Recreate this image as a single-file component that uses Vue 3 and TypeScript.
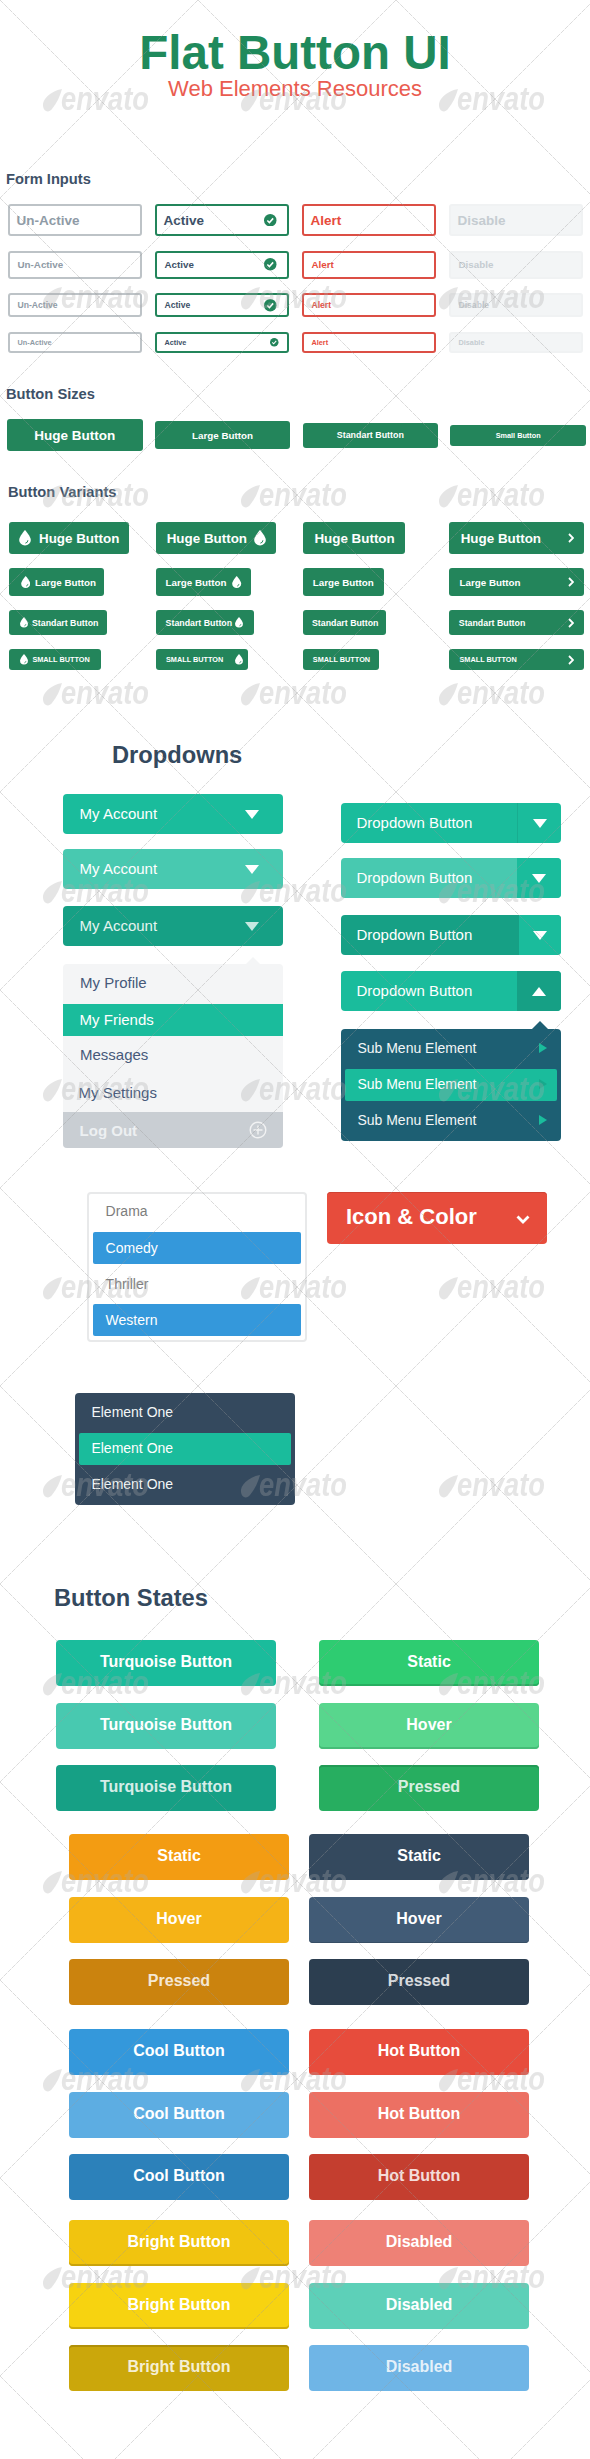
<script setup lang="ts">
type Field = { state: string; label: string };

const fields: Field[] = [
  { state: 'idle', label: 'Un-Active' },
  { state: 'active', label: 'Active' },
  { state: 'alert', label: 'Alert' },
  { state: 'off', label: 'Disable' },
];
const fieldSizes = ['f1', 'f2', 'f3', 'f4'];

const sizeButtons = [
  { size: 'huge', label: 'Huge Button' },
  { size: 'large', label: 'Large Button' },
  { size: 'std', label: 'Standart Button' },
  { size: 'small', label: 'Small Button' },
];

const variantRows = [
  { size: 'huge', label: 'Huge Button' },
  { size: 'large', label: 'Large Button' },
  { size: 'std', label: 'Standart Button' },
  { size: 'small', label: 'SMALL BUTTON' },
];
const variantKinds = ['left', 'right', 'plain', 'arrow'];

const accounts = ['base', 'hover', 'press'];
const splits = [
  { main: 'base', side: 'side-base' },
  { main: 'hover', side: 'side-solid' },
  { main: 'press', side: 'side-wide' },
];
const menuItems = [
  { label: 'My Profile', cls: 'm-first' },
  { label: 'My Friends', cls: 'm-on' },
  { label: 'Messages', cls: 'm-msg' },
  { label: 'My Settings', cls: 'm-set' },
];
const subItems = [
  { label: 'Sub Menu Element', on: false },
  { label: 'Sub Menu Element', on: true },
  { label: 'Sub Menu Element', on: false },
];
const genres = [
  { label: 'Drama', cls: 'g-first' },
  { label: 'Comedy', cls: 'g-on' },
  { label: 'Thriller', cls: 'g-plain' },
  { label: 'Western', cls: 'g-on' },
];

const stateGroups = [
  {
    cls: 'group-wide',
    items: [
      { label: 'Turquoise Button', cls: 'tq1' },
      { label: 'Static', cls: 'gr1' },
      { label: 'Turquoise Button', cls: 'tq2' },
      { label: 'Hover', cls: 'gr2' },
      { label: 'Turquoise Button', cls: 'tq3 dim' },
      { label: 'Pressed', cls: 'gr3 dim' },
    ],
  },
  {
    cls: 'group-a',
    items: [
      { label: 'Static', cls: 'or1' },
      { label: 'Static', cls: 'nv1' },
      { label: 'Hover', cls: 'or2' },
      { label: 'Hover', cls: 'nv2' },
      { label: 'Pressed', cls: 'or3 dim' },
      { label: 'Pressed', cls: 'nv3 dim' },
    ],
  },
  {
    cls: 'group-b',
    items: [
      { label: 'Cool Button', cls: 'bl1' },
      { label: 'Hot Button', cls: 'rd1' },
      { label: 'Cool Button', cls: 'bl2' },
      { label: 'Hot Button', cls: 'rd2' },
      { label: 'Cool Button', cls: 'bl3' },
      { label: 'Hot Button', cls: 'rd3 dim' },
    ],
  },
  {
    cls: 'group-c',
    items: [
      { label: 'Bright Button', cls: 'yl1' },
      { label: 'Disabled', cls: 'ds1' },
      { label: 'Bright Button', cls: 'yl2' },
      { label: 'Disabled', cls: 'ds2' },
      { label: 'Bright Button', cls: 'yl3 dim' },
      { label: 'Disabled', cls: 'ds3 dim' },
    ],
  },
];
</script>

<template>
  <div class="page">
    <h1 class="title">Flat Button UI</h1>
    <p class="subtitle">Web Elements Resources</p>

    <h2 class="label label-forms">Form Inputs</h2>
    <div class="fields">
      <template v-for="size in fieldSizes" :key="size">
        <div v-for="f in fields" :key="size + f.state" class="field" :class="[size, f.state]">
          <span>{{ f.label }}</span>
          <svg v-if="f.state === 'active'" class="check" viewBox="0 0 12 12">
            <circle cx="6" cy="6" r="6" fill="#23855b" />
            <path d="M3.2 6.2l2 2 3.6-4" fill="none" stroke="#fff" stroke-width="1.5" />
          </svg>
        </div>
      </template>
    </div>

    <h2 class="label label-sizes">Button Sizes</h2>
    <div class="sizes">
      <div v-for="b in sizeButtons" :key="b.size" class="size-btn" :class="b.size">{{ b.label }}</div>
    </div>

    <h2 class="label label-variants">Button Variants</h2>
    <div class="variants">
      <template v-for="row in variantRows" :key="row.size">
        <div v-for="kind in variantKinds" :key="row.size + kind" class="variant" :class="[row.size, kind]">
          <svg v-if="kind === 'left'" class="drop" viewBox="0 0 12 16">
            <path d="M6 0C6 0 0 6.8 0 10.2A6 5.8 0 0 0 12 10.2C12 6.8 6 0 6 0Z" fill="#fff" />
            <path d="M9 10.6a3.2 3.2 0 0 1-2.6 3" fill="none" stroke="#23855b" stroke-width="1" />
          </svg>
          <span>{{ row.label }}</span>
          <svg v-if="kind === 'right'" class="drop" viewBox="0 0 12 16">
            <path d="M6 0C6 0 0 6.8 0 10.2A6 5.8 0 0 0 12 10.2C12 6.8 6 0 6 0Z" fill="#fff" />
            <path d="M9 10.6a3.2 3.2 0 0 1-2.6 3" fill="none" stroke="#23855b" stroke-width="1" />
          </svg>
          <svg v-if="kind === 'arrow'" class="chev" viewBox="0 0 6 10">
            <path d="M1 1l4 4-4 4" fill="none" stroke="#fff" stroke-width="1.8" />
          </svg>
        </div>
      </template>
    </div>

    <h2 class="heading heading-drop">Dropdowns</h2>
    <div class="drops">
      <div class="drop-col">
        <div v-for="a in accounts" :key="a" class="account" :class="a">
          <span>My Account</span>
          <i class="tri-down"></i>
        </div>
        <div class="menu">
          <div v-for="m in menuItems" :key="m.label" class="menu-item" :class="m.cls">{{ m.label }}</div>
          <div class="menu-out">
            <span>Log Out</span>
            <svg class="plus" viewBox="0 0 18 18">
              <circle cx="9" cy="9" r="7.8" fill="none" stroke="#f1f2f3" stroke-width="1.4" />
              <path d="M9 4.5v9M4.5 9h9" stroke="#f1f2f3" stroke-width="1.4" />
            </svg>
          </div>
        </div>
      </div>

      <div class="drop-col col-right">
        <div v-for="s in splits" :key="s.main" class="split" :class="s.main">
          <span class="split-text">Dropdown Button</span>
          <div class="split-side" :class="s.side"><i class="tri-down"></i></div>
        </div>
        <div class="split base">
          <span class="split-text">Dropdown Button</span>
          <div class="split-side side-open"><i class="tri-up"></i></div>
        </div>
        <div class="sub">
          <div v-for="(s, i) in subItems" :key="i" class="row-item" :class="{ on: s.on }">
            <span>{{ s.label }}</span>
            <i class="tri-right"></i>
          </div>
        </div>
      </div>
    </div>

    <div class="pickers">
      <div class="genres">
        <div v-for="g in genres" :key="g.label" class="genre" :class="g.cls">{{ g.label }}</div>
      </div>
      <div class="icon-color">
        <span>Icon &amp; Color</span>
        <svg class="chev-down" viewBox="0 0 14 9">
          <path d="M1.5 1.5L7 7l5.5-5.5" fill="none" stroke="#fff" stroke-width="2.8" />
        </svg>
      </div>
    </div>

    <div class="elements">
      <div class="row-item"><span>Element One</span></div>
      <div class="row-item on"><span>Element One</span></div>
      <div class="row-item"><span>Element One</span></div>
    </div>

    <h2 class="heading heading-states">Button States</h2>
    <div v-for="g in stateGroups" :key="g.cls" class="states" :class="g.cls">
      <div v-for="(b, i) in g.items" :key="i" class="state" :class="b.cls"><span>{{ b.label }}</span></div>
    </div>

    <!-- stock-site watermark lying over the whole sheet -->
    <svg class="watermark" width="590" height="2459">
      <defs>
        <pattern id="wm-tile" width="198" height="198" patternUnits="userSpaceOnUse">
          <path d="M0 0L198 198M198 0L0 198" stroke="#999" stroke-opacity="0.5" stroke-width="0.7" stroke-dasharray="5 1" fill="none" />
          <path d="M62 89C50 91 42 100 43 106C43.5 112 49 113 52 109C57 103 60 96 62 89Z" fill="#aaa" fill-opacity="0.3" />
          <text x="61" y="110" font-family="'Liberation Sans', sans-serif" font-style="italic" font-weight="700" font-size="34" textLength="88" lengthAdjust="spacingAndGlyphs" fill="#aaa" fill-opacity="0.3">envato</text>
        </pattern>
      </defs>
      <rect width="590" height="2459" fill="url(#wm-tile)" />
    </svg>
  </div>
</template>

<style scoped>
.page {
  position: relative;
  width: 590px;
  height: 2459px;
  overflow: hidden;
  background: #fff;
  font-family: 'Liberation Sans', Arial, sans-serif;
  color: #34495e;
}

.title {
  margin: 0;
  padding-top: 29px;
  font-size: 47.5px;
  line-height: 48px;
  font-weight: 700;
  text-align: center;
  color: #1f8a5c;
}
.subtitle {
  margin: 1px 0 0;
  font-size: 22px;
  line-height: 22px;
  text-align: center;
  color: #ea5c50;
}

.label {
  margin: 0;
  font-size: 14.7px;
  line-height: 18px;
  font-weight: 700;
  color: #3d5168;
}
.label-forms { margin-top: 70px; padding-left: 6px; }
.label-sizes { margin-top: 32px; padding-left: 6px; }
.label-variants { margin-top: 32px; padding-left: 8px; }

.heading {
  margin: 0;
  font-size: 23.7px;
  line-height: 28px;
  font-weight: 700;
  color: #34495e;
}
.heading-drop { margin-top: 71px; padding-left: 112px; }
.heading-states { margin-top: 79px; padding-left: 54px; }

/* form inputs */
.fields {
  display: grid;
  grid-template-columns: repeat(4, 134px);
  grid-template-rows: 32px 28px 24px 21px;
  column-gap: 13px;
  row-gap: 14.7px;
  margin-top: 16px;
  padding-left: 7.5px;
}
.field {
  display: flex;
  align-items: center;
  justify-content: space-between;
  box-sizing: border-box;
  border: 2px solid #bdc3c7;
  border-radius: 3px;
  padding: 0 8px;
  font-weight: 700;
  color: #8f9ba6;
}
.field.f1 { font-size: 13.5px; padding-left: 7px; }
.field.f2 { font-size: 9.8px; }
.field.f3 { font-size: 8.6px; }
.field.f4 { font-size: 7.3px; }
.field.active { border-color: #23855b; color: #3d5168; }
.field.alert { border-color: #dc4f45; color: #e74c3c; }
.field.off { border-color: #f0f2f3; background: #f3f5f6; color: #c5ccd1; }
.check { width: 12.5px; height: 12.5px; margin-right: 2px; }
.f4 .check { width: 8.5px; height: 8.5px; margin-right: 0; }

/* sizes */
.sizes {
  display: flex;
  align-items: center;
  gap: 12.3px;
  margin-top: 16px;
  padding-left: 7px;
}
.size-btn {
  display: flex;
  align-items: center;
  justify-content: center;
  width: 135.5px;
  border-radius: 3px;
  background: #23855b;
  color: #fff;
  font-weight: 700;
}
.size-btn.huge { height: 32px; font-size: 13.5px; }
.size-btn.large { height: 28.6px; font-size: 9.8px; }
.size-btn.std { height: 25px; font-size: 8.9px; }
.size-btn.small { height: 21px; font-size: 7.3px; }

/* variants */
.variants {
  display: grid;
  grid-template-columns: repeat(4, 134px);
  grid-template-rows: 32px 28px 25px 21px;
  column-gap: 13px;
  row-gap: 14px;
  margin-top: 21px;
  padding-left: 9px;
}
.variant {
  display: flex;
  align-items: center;
  box-sizing: border-box;
  border-radius: 3px;
  background: #23855b;
  color: #fff;
  font-weight: 700;
}
.variant.huge { font-size: 13.4px; }
.variant.large { font-size: 9.8px; }
.variant.std { font-size: 8.8px; }
.variant.small { font-size: 7.3px; }
.drop { flex: none; }
.huge .drop { width: 12px; height: 15.5px; }
.large .drop { width: 9.4px; height: 12px; }
.std .drop, .small .drop { width: 8px; height: 10.5px; }
.chev { flex: none; width: 6px; height: 10px; }

.variant.left.huge { width: 120px; padding-left: 9.5px; gap: 8.5px; }
.variant.left.large { width: 95px; padding-left: 11.6px; gap: 5px; }
.variant.left.std { width: 98px; padding-left: 10.7px; gap: 4.3px; }
.variant.left.small { width: 92px; padding-left: 10.7px; gap: 4.7px; }

.variant.right { justify-content: space-between; }
.variant.right.huge { width: 120px; padding: 0 10.3px 0 10.7px; }
.variant.right.large { width: 95px; padding: 0 9.3px 0 9.6px; }
.variant.right.std { width: 97.6px; padding: 0 10.6px 0 9.6px; }
.variant.right.small { width: 91.6px; padding: 0 4.6px 0 10px; }

.variant.plain.huge { width: 102.4px; padding-left: 11.4px; }
.variant.plain.large { width: 81px; padding-left: 9.8px; }
.variant.plain.std { width: 83.4px; padding-left: 9px; }
.variant.plain.small { width: 76px; padding-left: 9.8px; }

.variant.arrow {
  justify-content: space-between;
  width: 135px;
  margin-left: -1px;
  padding-right: 10.5px;
}
.variant.arrow.huge { padding-left: 11.7px; }
.variant.arrow.large { padding-left: 10.5px; }
.variant.arrow.std { padding-left: 9.8px; }
.variant.arrow.small { padding-left: 10.5px; }

/* dropdowns */
.drops {
  display: flex;
  gap: 58px;
  margin-top: 25px;
  padding-left: 63px;
}
.drop-col { width: 220px; }
.col-right { padding-top: 9px; }

.tri-down, .tri-up, .tri-right { display: block; width: 0; height: 0; flex: none; }
.tri-down {
  border-left: 7px solid transparent;
  border-right: 7px solid transparent;
  border-top: 9px solid #fff;
}
.tri-up {
  border-left: 7px solid transparent;
  border-right: 7px solid transparent;
  border-bottom: 9px solid #fff;
}
.tri-right {
  border-top: 5.5px solid transparent;
  border-bottom: 5.5px solid transparent;
  border-left: 8px solid #1abc9c;
}

.account {
  display: flex;
  align-items: center;
  justify-content: space-between;
  box-sizing: border-box;
  height: 40px;
  padding: 0 24px 0 16.6px;
  border-radius: 4px;
  font-size: 15px;
  color: #fff;
}
.account span { margin-top: -2px; }
.account.base { background: #1abc9c; }
.account.hover { background: #48c9b0; margin-top: 15px; }
.account.press { background: #16a085; margin-top: 17px; color: #e4f4f0; }
.account.press .tri-down { border-top-color: #c6e9e1; }

.menu {
  position: relative;
  margin-top: 18px;
  border-radius: 4px;
  background: #f4f5f6;
  font-size: 15px;
  color: #46597a;
}
.menu::before {
  content: '';
  position: absolute;
  top: -7px;
  left: 183px;
  border-left: 7px solid transparent;
  border-right: 7px solid transparent;
  border-bottom: 7px solid #f4f5f6;
}
.menu-item {
  display: flex;
  align-items: center;
  padding-left: 17px;
}
.m-first { height: 40px; padding-bottom: 3px; box-sizing: border-box; }
.m-on { height: 32px; background: #1abc9c; color: #fff; padding-bottom: 2px; box-sizing: border-box; padding-left: 16.6px; }
.m-msg { height: 37px; }
.m-set { height: 39px; padding-left: 15.6px; }
.menu-out {
  display: flex;
  align-items: center;
  justify-content: space-between;
  box-sizing: border-box;
  height: 36px;
  padding: 0 16.5px 0 16.6px;
  border-radius: 0 0 4px 4px;
  background: #c9ced3;
  color: #edf0f2;
  font-weight: 700;
}
.plus { width: 18px; height: 18px; }

.split {
  display: flex;
  align-items: stretch;
  height: 40px;
  margin-top: 15px;
  border-radius: 4px;
  overflow: hidden;
  font-size: 15px;
  color: #fff;
}
.split:first-child { margin-top: 0; }
.split.press { margin-top: 17px; }
.split.press + .split { margin-top: 16px; }
.split.base { background: #1abc9c; }
.split.hover { background: #48c9b0; }
.split.press { background: #16a085; }
.split-text {
  flex: 1;
  padding: 0 0 2px 15.4px;
  display: flex;
  align-items: center;
}
.split-side {
  display: flex;
  align-items: center;
  justify-content: center;
  box-sizing: border-box;
  width: 44px;
}
.side-base { border-left: 1px solid #18ad90; }
.side-solid { background: #1abc9c; }
.side-wide { background: #1abc9c; width: 42px; }
.side-open { background: #16a085; }

.sub {
  position: relative;
  margin-top: 18px;
  padding: 0 4px;
  border-radius: 4px;
  background: #1d5f73;
}
.sub::before {
  content: '';
  position: absolute;
  top: -8px;
  left: 191px;
  border-left: 8px solid transparent;
  border-right: 8px solid transparent;
  border-bottom: 8px solid #1d5f73;
}
.row-item {
  display: flex;
  align-items: center;
  justify-content: space-between;
  box-sizing: border-box;
  height: 40px;
  padding: 0 10px 2px 12.4px;
  font-size: 14px;
  color: #f2f6f7;
}
.row-item.on {
  height: 32px;
  border-radius: 2px;
  background: #1abc9c;
  color: #fff;
}
.row-item.on .tri-right { border-left-color: #17a98c; }

/* pickers */
.pickers {
  display: flex;
  align-items: flex-start;
  gap: 20px;
  margin-top: 44px;
  padding-left: 87px;
}
.genres {
  box-sizing: border-box;
  width: 220px;
  height: 150px;
  padding: 0 4px;
  border: 2px solid #e8e9ea;
  border-radius: 4px;
  font-size: 14px;
  color: #7d7d7d;
}
.genre {
  display: flex;
  align-items: center;
  box-sizing: border-box;
  padding-left: 12.6px;
}
.g-first { height: 38px; padding-bottom: 4px; }
.g-plain { height: 40px; }
.g-on { height: 32px; border-radius: 2px; background: #3498db; color: #fff; }
.icon-color {
  display: flex;
  align-items: center;
  justify-content: space-between;
  box-sizing: border-box;
  width: 220px;
  height: 52px;
  padding: 0 17px 2px 19px;
  border-radius: 4px;
  background: #e74c3c;
  box-shadow: inset 0 1px 0 #cf4334;
  font-size: 22px;
  font-weight: 700;
  color: #fff;
}
.chev-down { width: 14px; height: 9px; margin-top: 5px; }

.elements {
  width: 220px;
  box-sizing: border-box;
  margin: 51px 0 0 75px;
  padding: 0 4px;
  border-radius: 4px;
  background: #34495e;
}

/* button states */
.states {
  display: grid;
  grid-template-columns: 220px 220px;
  grid-template-rows: 63px 62px 46px;
}
.group-wide { margin-top: 28px; padding-left: 56px; column-gap: 43px; }
.group-a { margin-top: 23px; padding-left: 69px; column-gap: 20px; }
.group-b { margin-top: 24px; padding-left: 69px; column-gap: 20px; }
.group-c { margin-top: 20px; padding-left: 69px; column-gap: 20px; }
.state {
  display: flex;
  align-items: center;
  justify-content: center;
  box-sizing: border-box;
  height: 46px;
  padding-bottom: 2px;
  border-radius: 4px;
  font-size: 16px;
  font-weight: 700;
  color: #fff;
}
.state.dim span { opacity: 0.82; }
.tq1 { background: #1abc9c; }
.tq2 { background: #48c9b0; }
.tq3 { background: #16a085; }
.gr1 { background: #2ecc71; box-shadow: inset 0 -2px 0 #27ae60; }
.gr2 { background: #58d68d; box-shadow: inset 0 -2px 0 #46bd78; }
.gr3 { background: #27ae60; box-shadow: inset 0 2px 0 #229a55; }
.or1 { background: #f39c12; }
.or2 { background: #f5b316; }
.or3 { background: #cb830e; }
.nv1 { background: #34495e; }
.nv2 { background: #415b76; box-shadow: inset 0 -1px 0 #374e65; }
.nv3 { background: #2c3e50; }
.bl1 { background: #3498db; }
.bl2 { background: #5dade2; }
.bl3 { background: #2c81ba; }
.rd1 { background: #e74c3c; }
.rd2 { background: #ec7063; }
.rd3 { background: #c43e2f; }
.yl1 { background: #f1c40f; box-shadow: inset 0 -2px 0 #c9a30b; }
.yl2 { background: #f7d310; box-shadow: inset 0 -2px 0 #d0ad0b; }
.yl3 { background: #cba70b; box-shadow: inset 0 2px 0 #b08f08; }
.ds1 { background: #ee8176; }
.ds2 { background: #5dd0b8; }
.ds3 { background: #6fb5e6; }

.watermark {
  position: absolute;
  top: 0;
  left: 0;
  pointer-events: none;
}
</style>

<style>
html, body {
  margin: 0;
  background: #fff;
}
</style>
